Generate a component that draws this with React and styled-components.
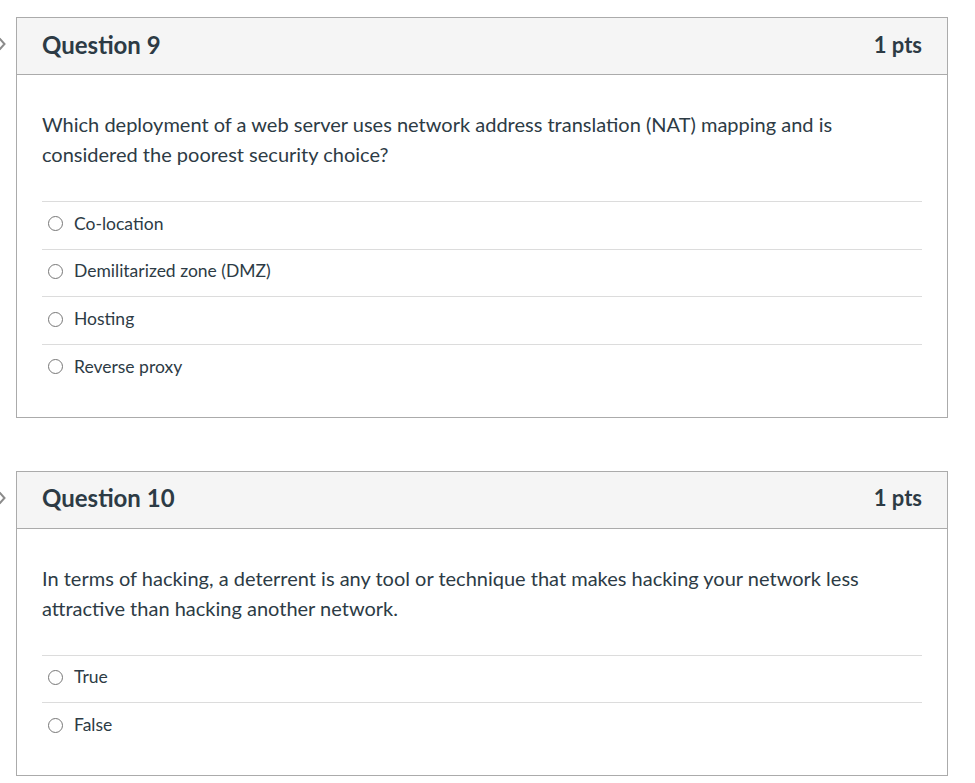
import React from 'react';
import styled, { createGlobalStyle } from 'styled-components';

const Global = createGlobalStyle`
  body {
    margin: 0;
    background: #fff;
    font-family: Lato, "Open Sans", sans-serif;
    color: #2d3b45;
  }
`

const Page = styled.div`
  display: flex;
  flex-direction: column;
  gap: 53px;
  padding: 17px 27px 0 16px;
`

const Card = styled.div`
  position: relative;
  border: 1px solid #ababab;
  background: #fff;
`

const Marker = styled.svg`
  position: absolute;
  left: -19px;
  top: 19px;
`

const Header = styled.div`
  display: flex;
  align-items: center;
  justify-content: space-between;
  height: 57px;
  box-sizing: border-box;
  padding: 0 25px 4px 25px;
  background: #f5f5f5;
  border-bottom: 1px solid #ababab;
`

const Title = styled.div`
  font-size: 24px;
  font-weight: 700;
`

const Points = styled.div`
  font-size: 22px;
  font-weight: 700;
`

const Body = styled.div`
  padding: 34px 25px 25px 25px;
`

const Prompt = styled.p`
  margin: 0 0 32px 0;
  font-size: 20px;
  line-height: 30px;
`

const Answers = styled.div`
  display: flex;
  flex-direction: column;
`

const Answer = styled.label`
  display: flex;
  align-items: center;
  gap: 11px;
  height: 46.67px;
  box-sizing: content-box;
  padding: 0 0 0 6px;
  border-top: 1px solid #dcdcdc;
  font-size: 17.5px;
  line-height: 1;
`

const Radio = styled.span`
  width: 13px;
  height: 13px;
  margin-top: -3px;
  border-radius: 50%;
  border: 1px solid #777;
  flex-shrink: 0;
`

const Label = styled.span`
  margin-top: -4px;
`

function Question({ num, text, options }) {
  return (
    <Card>
      <Marker width="8" height="14" viewBox="0 0 8 14">
        <path d="M1.5 1.5 L6.5 7 L1.5 12.5" fill="none" stroke="#8b8b8b" strokeWidth="2" />
      </Marker>
      <Header>
        <Title>Question {num}</Title>
        <Points>1 pts</Points>
      </Header>
      <Body>
        <Prompt>{text}</Prompt>
        <Answers>
          {options.map(o => (
            <Answer key={o}>
              <Radio />
              <Label>{o}</Label>
            </Answer>
          ))}
        </Answers>
      </Body>
    </Card>
  )
}

export default function App() {
  return (
    <Page>
      <Global />
      <Question
        num={9}
        text={<>Which deployment of a web server uses network address translation (NAT) mapping and is<br />considered the poorest security choice?</>}
        options={['Co-location', 'Demilitarized zone (DMZ)', 'Hosting', 'Reverse proxy']}
      />
      <Question
        num={10}
        text={<>In terms of hacking, a deterrent is any tool or technique that makes hacking your network less<br />attractive than hacking another network.</>}
        options={['True', 'False']}
      />
    </Page>
  )
}
